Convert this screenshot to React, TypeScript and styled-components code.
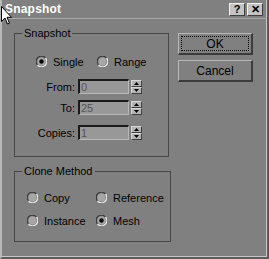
import React from 'react';
import styled, { createGlobalStyle } from 'styled-components';

const GlobalStyle = createGlobalStyle`
  html, body {
    margin: 0;
    padding: 0;
    background: #808080;
  }
  body {
    font-family: 'Liberation Sans', Arial, sans-serif;
    font-size: 11px;
    color: #000;
  }
`;

const Window = styled.div`
  position: relative;
  width: 269px;
  height: 259px;
  box-sizing: border-box;
  background: #808080;
  border-left: 2px solid #b8b8b8;
  border-right: 2px solid #5c5c5c;
  border-bottom: 2px solid #5c5c5c;
  box-shadow: inset -1px -1px 0 #c8c8c8;
  display: flex;
  flex-direction: column;
`;

const TitleBar = styled.div`
  height: 19px;
  box-sizing: border-box;
  border-bottom: 1px solid #a8a8a8;
  display: flex;
  align-items: center;
  padding: 0 4px 0 3px;
`;

const Title = styled.div`
  flex: 1;
  color: #fff;
  font-weight: bold;
  font-size: 12px;
  letter-spacing: 0.2px;
`;

const TitleButton = styled.div`
  width: 16px;
  height: 13px;
  box-sizing: border-box;
  margin-left: 2px;
  background: #c4c4c4;
  border-top: 1px solid #f0f0f0;
  border-left: 1px solid #f0f0f0;
  border-right: 1px solid #404040;
  border-bottom: 1px solid #404040;
  display: flex;
  align-items: center;
  justify-content: center;
  font-weight: bold;
  font-size: 11px;
  line-height: 1;
`;

const Body = styled.div`
  flex: 1;
  display: flex;
  padding: 8px 0 0 12px;
  gap: 7px;
`;

const LeftColumn = styled.div`
  display: flex;
  flex-direction: column;
  gap: 8px;
`;

const Group = styled.fieldset<{ $w: number; $h: number }>`
  width: ${(p) => p.$w}px;
  height: ${(p) => p.$h}px;
  box-sizing: border-box;
  margin: 0;
  padding: 0;
  border: 1px solid #474747;
  position: relative;
`;

const Legend = styled.legend`
  margin-left: 7px;
  padding: 0 2px;
  line-height: 13px;
  font-size: 11px;
`;

const RadioRow = styled.div<{ $left: number; $top: number; $col: number }>`
  display: grid;
  grid-template-columns: ${(p) => p.$col}px auto;
  margin: ${(p) => p.$top}px 0 0 ${(p) => p.$left}px;
`;

const RadioItem = styled.label`
  display: flex;
  align-items: center;
  gap: 6px;
  height: 13px;
`;

const FieldRow = styled.div<{ $top: number }>`
  display: flex;
  align-items: center;
  margin-top: ${(p) => p.$top}px;
  height: 15px;
`;

const FieldLabel = styled.span`
  width: 60px;
  text-align: right;
  padding-right: 3px;
`;

const Input = styled.div`
  width: 51px;
  height: 15px;
  box-sizing: border-box;
  background: #989898;
  border-top: 2px solid #1a1a1a;
  border-left: 2px solid #1a1a1a;
  border-right: 1px solid #b8b8b8;
  border-bottom: 1px solid #b8b8b8;
  color: #555;
  font-size: 11px;
  line-height: 12px;
  padding-left: 1px;
`;

const Spinner = styled.div`
  margin-left: 2px;
  display: flex;
  flex-direction: column;
`;

const SpinButton = styled.div`
  width: 11px;
  height: 7px;
  box-sizing: border-box;
  background: #b4b4b4;
  border-top: 1px solid #d8d8d8;
  border-left: 1px solid #d8d8d8;
  border-right: 1px solid #404040;
  border-bottom: 1px solid #404040;
  display: flex;
  align-items: center;
  justify-content: center;
`;

const RightColumn = styled.div`
  display: flex;
  flex-direction: column;
  gap: 5px;
  padding-top: 6px;
`;

const Button = styled.div<{ $focus?: boolean }>`
  width: 75px;
  height: 22px;
  box-sizing: border-box;
  border-top: 1px solid #b8b8b8;
  border-left: 1px solid #b8b8b8;
  border-right: 2px solid #3c3c3c;
  border-bottom: 2px solid #3c3c3c;
  display: flex;
  align-items: center;
  justify-content: center;
  font-size: 12px;
  position: relative;
  ${(p) =>
    p.$focus &&
    `&::after {
      content: '';
      position: absolute;
      inset: 2px;
      border: 1px dotted #000;
    }`}
`;

const Cursor = styled.svg`
  position: absolute;
  left: -2px;
  top: 6px;
`;

const Radio: React.FC<{ checked?: boolean }> = ({ checked }) => (
  <svg width="11" height="11" viewBox="0 0 11 11">
    <path d="M9.5 2 A5 5 0 0 0 1.5 9" fill="none" stroke="#3a3a3a" strokeWidth="1.2" />
    <path d="M1.5 9 A5 5 0 0 0 9.5 2" fill="none" stroke="#e8e8e8" strokeWidth="1.2" />
    <circle cx="5.5" cy="5.5" r="4" fill="#a6a6a6" />
    {checked && <circle cx="5.5" cy="5.5" r="2.2" fill="#000" />}
  </svg>
);

const Arrow: React.FC<{ up?: boolean }> = ({ up }) => (
  <svg width="5" height="3" viewBox="0 0 5 3">
    <path d={up ? 'M2.5 0 L5 3 L0 3 Z' : 'M0 0 L5 0 L2.5 3 Z'} fill="#000" />
  </svg>
);

const fields = [
  { label: 'From:', value: '0', top: 11 },
  { label: 'To:', value: '25', top: 6 },
  { label: 'Copies:', value: '1', top: 10 },
];

const App: React.FC = () => (
  <>
    <GlobalStyle />
    <Window>
      <TitleBar>
        <Title>Snapshot</Title>
        <TitleButton>?</TitleButton>
        <TitleButton>✕</TitleButton>
      </TitleBar>
      <Body>
        <LeftColumn>
          <Group $w={155} $h={130}>
            <Legend>Snapshot</Legend>
            <RadioRow $left={21} $top={15} $col={61}>
              <RadioItem>
                <Radio checked />
                Single
              </RadioItem>
              <RadioItem>
                <Radio />
                Range
              </RadioItem>
            </RadioRow>
            {fields.map(({ label, value, top }) => (
              <FieldRow $top={top} key={label}>
                <FieldLabel>{label}</FieldLabel>
                <Input>{value}</Input>
                <Spinner>
                  <SpinButton>
                    <Arrow up />
                  </SpinButton>
                  <SpinButton>
                    <Arrow />
                  </SpinButton>
                </Spinner>
              </FieldRow>
            ))}
          </Group>
          <Group $w={157} $h={77}>
            <Legend>Clone Method</Legend>
            <RadioRow $left={12} $top={13} $col={69}>
              <RadioItem>
                <Radio />
                Copy
              </RadioItem>
              <RadioItem>
                <Radio />
                Reference
              </RadioItem>
            </RadioRow>
            <RadioRow $left={12} $top={10} $col={69}>
              <RadioItem>
                <Radio />
                Instance
              </RadioItem>
              <RadioItem>
                <Radio checked />
                Mesh
              </RadioItem>
            </RadioRow>
          </Group>
        </LeftColumn>
        <RightColumn>
          <Button $focus>OK</Button>
          <Button>Cancel</Button>
        </RightColumn>
      </Body>
      <Cursor width="13" height="20" viewBox="0 0 13 20">
        <path
          d="M1.5 0.5 L1.5 15.5 L5 12 L7.5 18 L9.5 17.2 L7 11.3 L11.5 11.3 Z"
          fill="#fff"
          stroke="#000"
          strokeWidth="1"
        />
      </Cursor>
    </Window>
  </>
);

export default App;
